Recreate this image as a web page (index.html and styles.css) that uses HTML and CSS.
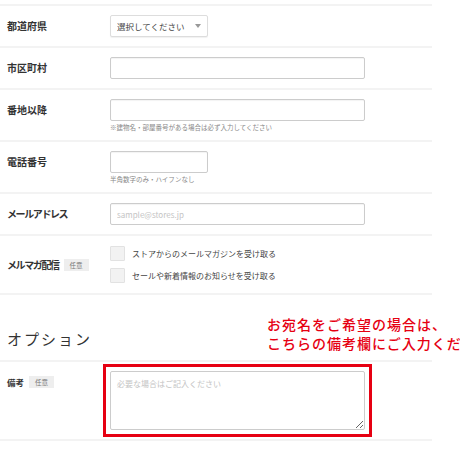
FILE: index.html
```html
<!DOCTYPE html>
<html lang="ja">
  <head>
    <meta charset="UTF-8" />
    <title>お届け先の入力</title>
    <link rel="stylesheet" href="styles.css">
  </head>
  <body>
    <div class="page">
      <div class="form">
        <div class="row">
          <div class="label">都道府県</div>
          <div class="field">
            <div class="select">
              <select>
                <option>選択してください</option>
              </select>
            </div>
          </div>
        </div>

        <div class="row">
          <div class="label">市区町村</div>
          <div class="field">
            <input type="text" class="input" />
          </div>
        </div>

        <div class="row has-hint">
          <div class="label">番地以降</div>
          <div class="field">
            <input type="text" class="input" />
            <p class="hint">※建物名・部屋番号がある場合は必ず入力してください</p>
          </div>
        </div>

        <div class="row has-hint">
          <div class="label">電話番号</div>
          <div class="field">
            <input type="tel" class="input short" />
            <p class="hint">半角数字のみ・ハイフンなし</p>
          </div>
        </div>

        <div class="row">
          <div class="label kana">メールアドレス</div>
          <div class="field">
            <input type="email" class="input" placeholder="sample@stores.jp" />
          </div>
        </div>

        <div class="row center">
          <div class="label"><span class="kana">メルマガ配信</span><span class="badge">任意</span></div>
          <div class="field checks">
            <label class="check"><span class="box"></span>ストアからのメールマガジンを受け取る</label>
            <label class="check"><span class="box"></span>セールや新着情報のお知らせを受け取る</label>
          </div>
        </div>
      </div>

      <h2 class="section-title">オプション</h2>

      <div class="form">
        <div class="row">
          <div class="label"><span class="small">備考</span><span class="badge">任意</span></div>
          <div class="field">
            <div class="note-frame">
              <textarea class="note" placeholder="必要な場合はご記入ください"></textarea>
            </div>
          </div>
        </div>
      </div>

      <div class="callout">
        お宛名をご希望の場合は、<br>
        こちらの備考欄にご入力ください。
      </div>
    </div>
  </body>
</html>
```

FILE: styles.css
```css
body {
  margin: 0;
  background: #fff;
  font-family: "Noto Sans CJK JP", "Noto Sans", sans-serif;
  color: #333;
  overflow: hidden;
}

.page {
  position: relative;
  width: 460px;
  height: 460px;
  padding-top: 4px;
  box-sizing: border-box;
}

.form {
  width: 432px;
  border-top: 2px solid #f3f3f3;
}

.row {
  display: grid;
  grid-template-columns: 103px 1fr;
  align-items: start;
  padding: 9px 0 9px 7px;
  border-bottom: 2px solid #f3f3f3;
}

.row.has-hint {
  padding-bottom: 8px;
}

.row.center {
  align-items: center;
}

.label {
  font-size: 10px;
  font-weight: bold;
  line-height: 22px;
  white-space: nowrap;
}

.kana {
  letter-spacing: -1.4px;
}

.small {
  font-size: 8.5px;
}

.badge {
  display: inline-block;
  margin-left: 5px;
  padding: 0 6px;
  background: #eee;
  color: #777;
  font-size: 6.5px;
  font-weight: normal;
  letter-spacing: 0;
  line-height: 12px;
  vertical-align: 1px;
}

.select {
  position: relative;
  width: 98px;
}

.select select {
  display: block;
  appearance: none;
  width: 98px;
  height: 22px;
  padding: 0 6px;
  border: 1px solid #ddd;
  border-radius: 2px;
  background: #fff;
  box-shadow: 0 1px 1px rgba(0, 0, 0, 0.06);
  font-family: inherit;
  font-size: 8.5px;
  color: #444;
}

.select::after {
  content: "";
  position: absolute;
  right: 7px;
  top: 9px;
  border-left: 3px solid transparent;
  border-right: 3px solid transparent;
  border-top: 4px solid #999;
}

.input {
  display: block;
  box-sizing: border-box;
  width: 255px;
  height: 22px;
  margin: 0;
  padding: 0 6px;
  border: 1px solid #ccc;
  border-radius: 2px;
  box-shadow: inset 0 1px 1px rgba(0, 0, 0, 0.05);
  font-family: inherit;
  font-size: 8px;
  outline: none;
}

.input.short {
  width: 98px;
}

.input::placeholder {
  color: #c4c4c4;
}

.hint {
  margin: 2px 0 0;
  font-size: 6.5px;
  color: #888;
  line-height: 9px;
}

.checks {
  display: flex;
  flex-direction: column;
  gap: 7px;
  padding: 1px 0;
}

.check {
  display: flex;
  align-items: center;
  gap: 7px;
  font-size: 8px;
  color: #444;
  line-height: 14px;
}

.box {
  width: 13px;
  height: 13px;
  border: 1px solid #e2e2e2;
  border-radius: 1px;
  background: #f2f2f2;
}

.section-title {
  margin: 0;
  padding: 33px 0 10px 7px;
  font-size: 15px;
  font-weight: normal;
  letter-spacing: 2px;
  line-height: 22px;
  color: #333;
}

.note-frame {
  width: 255px;
  margin: -7px;
  padding: 4px;
  border: 3px solid #e60012;
}

.note {
  display: block;
  box-sizing: border-box;
  width: 255px;
  height: 59px;
  margin: 0;
  padding: 6px;
  border: 1px solid #ccc;
  border-radius: 2px;
  font-family: inherit;
  font-size: 8px;
  outline: none;
}

.note::placeholder {
  color: #c4c4c4;
}

.callout {
  position: absolute;
  left: 262px;
  top: 314px;
  padding: 1px 4px 1px 5px;
  background: #fff;
  color: #e60012;
  font-size: 14px;
  font-weight: 500;
  letter-spacing: 1px;
  line-height: 19px;
  white-space: nowrap;
}
```
